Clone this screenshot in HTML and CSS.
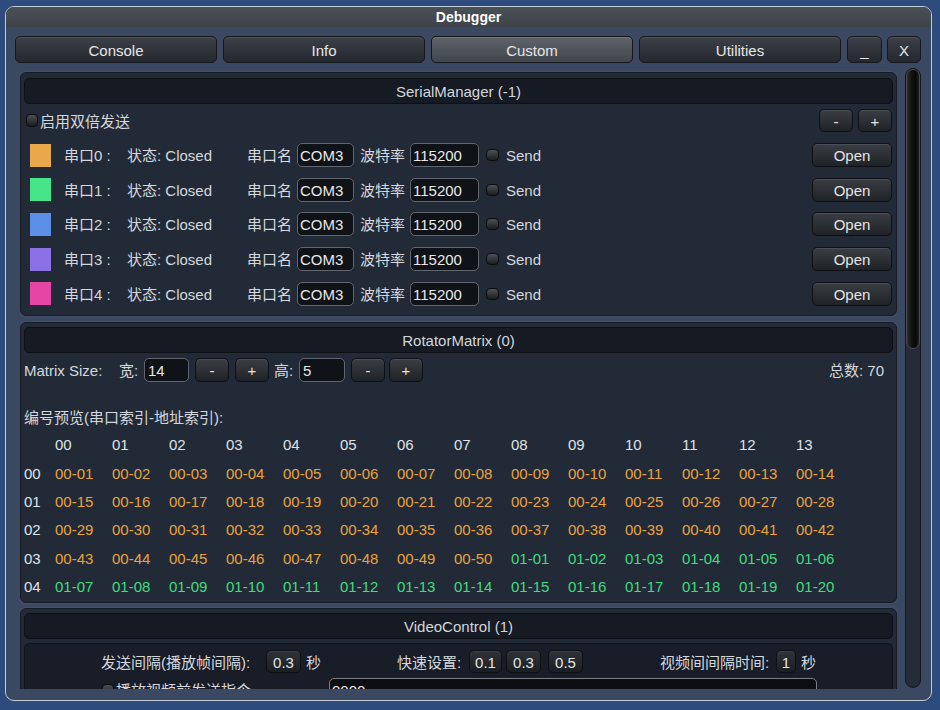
FILE: index.html
```html
<!DOCTYPE html>
<html>
<head>
<meta charset="utf-8">
<link rel="stylesheet" href="styles.css">
</head>
<body>
<div class="window">
  <div class="titlebar">Debugger</div>
  <div class="tabs">
    <div class="tab">Console</div>
    <div class="tab">Info</div>
    <div class="tab active">Custom</div>
    <div class="tab">Utilities</div>
    <div class="tab small">_</div>
    <div class="tab small x">X</div>
  </div>
  <div class="main">
    <div class="viewport">
      <div class="section s1">
        <div class="sec-head">SerialManager (-1)</div>
        <div class="toprow">
          <span class="chk chk-top"></span><span class="toplabel">启用双倍发送</span>
          <span class="btn pm minus">-</span><span class="btn pm plus">+</span>
        </div>
        <div class="srow"><span class="sw c0"></span><span class="plabel">串口0 :</span><span class="status">状态: Closed</span><span class="lbl">串口名</span><span class="field com">COM3</span><span class="lbl baud-l">波特率</span><span class="field baud">115200</span><span class="chk send-chk"></span><span class="send">Send</span><span class="btn open">Open</span></div>
        <div class="srow"><span class="sw c1"></span><span class="plabel">串口1 :</span><span class="status">状态: Closed</span><span class="lbl">串口名</span><span class="field com">COM3</span><span class="lbl baud-l">波特率</span><span class="field baud">115200</span><span class="chk send-chk"></span><span class="send">Send</span><span class="btn open">Open</span></div>
        <div class="srow"><span class="sw c2"></span><span class="plabel">串口2 :</span><span class="status">状态: Closed</span><span class="lbl">串口名</span><span class="field com">COM3</span><span class="lbl baud-l">波特率</span><span class="field baud">115200</span><span class="chk send-chk"></span><span class="send">Send</span><span class="btn open">Open</span></div>
        <div class="srow"><span class="sw c3"></span><span class="plabel">串口3 :</span><span class="status">状态: Closed</span><span class="lbl">串口名</span><span class="field com">COM3</span><span class="lbl baud-l">波特率</span><span class="field baud">115200</span><span class="chk send-chk"></span><span class="send">Send</span><span class="btn open">Open</span></div>
        <div class="srow"><span class="sw c4"></span><span class="plabel">串口4 :</span><span class="status">状态: Closed</span><span class="lbl">串口名</span><span class="field com">COM3</span><span class="lbl baud-l">波特率</span><span class="field baud">115200</span><span class="chk send-chk"></span><span class="send">Send</span><span class="btn open">Open</span></div>
      </div>

      <div class="section s2">
        <div class="sec-head">RotatorMatrix (0)</div>
        <div class="mrow">
          <span class="msize">Matrix Size:</span>
          <span class="wl">宽:</span><span class="field mfield">14</span>
          <span class="btn mb">-</span><span class="btn mb mb2">+</span>
          <span class="wl hl">高:</span><span class="field mfield">5</span>
          <span class="btn mb">-</span><span class="btn mb mb3">+</span>
          <span class="total">总数: 70</span>
        </div>
        <div class="preview">编号预览(串口索引-地址索引):</div>
        <div class="grid">
          <span></span><span>00</span><span>01</span><span>02</span><span>03</span><span>04</span><span>05</span><span>06</span><span>07</span><span>08</span><span>09</span><span>10</span><span>11</span><span>12</span><span>13</span>
          <span>00</span><span class="o">00-01</span><span class="o">00-02</span><span class="o">00-03</span><span class="o">00-04</span><span class="o">00-05</span><span class="o">00-06</span><span class="o">00-07</span><span class="o">00-08</span><span class="o">00-09</span><span class="o">00-10</span><span class="o">00-11</span><span class="o">00-12</span><span class="o">00-13</span><span class="o">00-14</span>
          <span>01</span><span class="o">00-15</span><span class="o">00-16</span><span class="o">00-17</span><span class="o">00-18</span><span class="o">00-19</span><span class="o">00-20</span><span class="o">00-21</span><span class="o">00-22</span><span class="o">00-23</span><span class="o">00-24</span><span class="o">00-25</span><span class="o">00-26</span><span class="o">00-27</span><span class="o">00-28</span>
          <span>02</span><span class="o">00-29</span><span class="o">00-30</span><span class="o">00-31</span><span class="o">00-32</span><span class="o">00-33</span><span class="o">00-34</span><span class="o">00-35</span><span class="o">00-36</span><span class="o">00-37</span><span class="o">00-38</span><span class="o">00-39</span><span class="o">00-40</span><span class="o">00-41</span><span class="o">00-42</span>
          <span>03</span><span class="o">00-43</span><span class="o">00-44</span><span class="o">00-45</span><span class="o">00-46</span><span class="o">00-47</span><span class="o">00-48</span><span class="o">00-49</span><span class="o">00-50</span><span class="g">01-01</span><span class="g">01-02</span><span class="g">01-03</span><span class="g">01-04</span><span class="g">01-05</span><span class="g">01-06</span>
          <span>04</span><span class="g">01-07</span><span class="g">01-08</span><span class="g">01-09</span><span class="g">01-10</span><span class="g">01-11</span><span class="g">01-12</span><span class="g">01-13</span><span class="g">01-14</span><span class="g">01-15</span><span class="g">01-16</span><span class="g">01-17</span><span class="g">01-18</span><span class="g">01-19</span><span class="g">01-20</span>
        </div>
      </div>

      <div class="section s3">
        <div class="sec-head">VideoControl (1)</div>
        <div class="vbox">
          <div class="vrow">
            <span class="vl1">发送间隔(播放帧间隔):</span>
            <span class="btn vb w35">0.3</span>
            <span class="sec sec1">秒</span>
            <span class="vl2">快速设置:</span>
            <span class="btn vb w33">0.1</span>
            <span class="btn vb w35 q2">0.3</span>
            <span class="btn vb w35 q3">0.5</span>
            <span class="vl3">视频间间隔时间:</span>
            <span class="btn vb w20">1</span>
            <span class="sec">秒</span>
          </div>
          <div class="vrow2">
            <span class="chk vchk"></span><span class="vtext">播放视频前发送指令</span>
            <span class="field vfield">0000</span>
          </div>
        </div>
      </div>
    </div>
    <div class="scroll"><div class="thumb"></div></div>
  </div>
</div>
</body>
</html>
```

FILE: styles.css
```css
body {
  margin: 0;
  background: #2d4b7c;
  font-family: "Liberation Sans", "Noto Sans CJK SC", sans-serif;
  font-size: 15px;
  color: #d4d8de;
}

.window {
  margin: 6px 0 0 5px;
  width: 927px;
  height: 695px;
  box-sizing: border-box;
  border: 1px solid #c4cbd5;
  border-radius: 9px;
  background: #3b4862;
  overflow: hidden;
}

.titlebar {
  height: 20px;
  background: linear-gradient(#4b4f56, #3e4249);
  color: #ffffff;
  font-weight: bold;
  font-size: 14px;
  line-height: 20px;
  text-align: center;
}

.tabs {
  display: flex;
  margin: 9px 0 0 9px;
  height: 27px;
}

.tab {
  width: 202px;
  margin-right: 6px;
  box-sizing: border-box;
  border: 1px solid #15181c;
  border-radius: 5px;
  background: linear-gradient(#3c4047, #24282e);
  color: #e6e6e6;
  text-align: center;
  padding-top: 2px;
  line-height: 23px;
  box-shadow: inset 0 1px 0 #4d5259;
}

.tab.active {
  background: linear-gradient(#5f646b, #41464d);
  box-shadow: inset 0 1px 0 #747980;
}

.tab.small {
  width: 35px;
  margin-right: 5px;
}

.tab.x {
  width: 34px;
}

.main {
  display: flex;
  margin-top: 5px;
  height: 621px;
}

.viewport {
  width: 877px;
  margin-left: 14px;
  height: 621px;
  overflow: hidden;
  padding-top: 4px;
  box-sizing: border-box;
}

.scroll {
  margin-left: 8px;
  width: 16px;
  height: 620px;
  box-sizing: border-box;
  border: 1px solid #141922;
  border-radius: 8px;
  background: #242b39;
}

.thumb {
  width: 14px;
  height: 280px;
  box-sizing: border-box;
  border: 1px solid #4a4a4a;
  border-radius: 7px;
  background: linear-gradient(to right, #2e2e2e, #141414 35%, #080808 70%, #1e1e1e);
}

.section {
  box-sizing: border-box;
  border: 1px solid #161b24;
  border-radius: 6px;
  background: #232a37;
  padding: 5px 3px 0;
  margin-bottom: 6px;
  box-shadow: 0 0 0 1px #44506a;
}

.s1 { height: 244px; }
.s2 { height: 281px; padding-top: 4px; margin-bottom: 5px; }
.s3 { height: 200px; padding-top: 4px; }

.sec-head {
  height: 26px;
  box-sizing: border-box;
  border: 1px solid #0d1015;
  border-radius: 5px;
  background: #161a22;
  text-align: center;
  padding-top: 1px;
  line-height: 23px;
  color: #d2d6dc;
}

/* text in control rows sits 1px below the box centre */
.toprow > span,
.srow > span,
.mrow > span,
.vrow > span,
.vrow2 > span {
  padding-top: 2px;
}

.btn {
  display: inline-block;
  box-sizing: border-box;
  border: 1px solid #0e1013;
  border-radius: 5px;
  background: linear-gradient(#3a3e44, #1f2226);
  box-shadow: inset 0 1px 0 #4a4e55;
  color: #e4e4e4;
  text-align: center;
}

.field {
  display: inline-block;
  box-sizing: border-box;
  height: 24px;
  border: 1px solid #62666c;
  border-radius: 5px;
  background: #0f1216;
  color: #e8e8e8;
  line-height: 20px;
  padding-left: 2px;
}

.chk {
  display: inline-block;
  box-sizing: border-box;
  width: 13px;
  height: 12px;
  border: 1px solid #0a0b0d;
  border-radius: 4px;
  background: linear-gradient(#4c4f54, #1b1d20);
}

/* Serial manager */
.toprow {
  display: flex;
  align-items: center;
  margin-top: 5px;
  height: 23px;
  line-height: 20px;
}

.chk-top {
  width: 12px;
  height: 13px;
  margin-left: 2px;
}

.toplabel {
  margin-left: 2px;
}

.pm {
  width: 34px;
  height: 23px;
  line-height: 19px;
}

.pm.minus {
  margin-left: auto;
}

.pm.plus {
  margin-left: 5px;
  margin-right: 1px;
}

.srow {
  display: flex;
  align-items: center;
  height: 24px;
  margin-top: 10.7px;
  line-height: 20px;
}

.toprow + .srow {
  margin-top: 11px;
}

.sw {
  width: 21px;
  height: 21px;
  margin-left: 6px;
}

.c0 { background: #e9a84a; }
.c1 { background: #47e58a; }
.c2 { background: #5b8fe8; }
.c3 { background: #8b70e6; }
.c4 { background: #e546a6; }

.plabel {
  margin-left: 13px;
  width: 63px;
}

.status { width: 120px; }
.lbl { width: 50px; }
.baud-l { margin-left: 6px; }
.com { width: 57px; }
.baud { width: 69px; }

.send-chk { margin-left: 7px; }
.send { margin-left: 7px; }

.open {
  margin-left: auto;
  margin-right: 1px;
  width: 80px;
  height: 24px;
  line-height: 20px;
}

/* Rotator matrix */
.mrow {
  display: flex;
  align-items: center;
  height: 24px;
  margin-top: 5px;
  line-height: 20px;
}

.msize { width: 95px; }
.wl { width: 25px; }
.mfield { width: 45px; padding-left: 3px; }
.hl + .mfield { width: 46px; }

.mb {
  width: 34px;
  height: 24px;
  line-height: 20px;
  margin-left: 6px;
}

.mb2 { margin-right: 5px; }
.mb3 { margin-left: 4px; }

.total {
  margin-left: auto;
  margin-right: 9px;
}

.preview {
  margin-top: 21px;
  height: 28px;
  padding-top: 2px;
  box-sizing: border-box;
  line-height: 26px;
}

.grid {
  display: grid;
  grid-template-columns: 31px repeat(14, 57px);
  grid-auto-rows: 28.4px;
  align-items: center;
  color: #dfe2e6;
  line-height: 20px;
}

.grid .o { color: #e7a33f; }
.grid .g { color: #3fdd7d; }

/* Video control */
.vbox {
  margin-top: 4px;
  height: 120px;
  box-sizing: border-box;
  border: 1px solid #10141a;
  border-radius: 5px;
  background: #181d27;
  padding: 6px 0 0 76px;
}

.vrow {
  display: flex;
  align-items: center;
  height: 23px;
  line-height: 20px;
}

.vb {
  height: 23px;
  line-height: 19px;
  background: linear-gradient(#30343a, #1b1e22);
  box-shadow: inset 0 1px 0 #3e4248;
}

.w35 { width: 35px; }
.w33 { width: 33px; }
.w20 { width: 20px; }

.vl1 { width: 165px; }
.sec { margin-left: 5px; }
.sec1 { width: 91px; }
.vl2 { width: 72px; }
.q2 { margin-left: 4px; }
.q3 { margin-left: 7px; }
.vl3 { margin-left: 77px; width: 116px; }

.vrow2 {
  display: flex;
  align-items: center;
  margin-top: 5px;
  height: 24px;
  line-height: 20px;
}

.vchk {
  margin-left: 1px;
  width: 12px;
  height: 12px;
}

.vtext {
  margin-left: 2px;
  width: 213px;
}

.vfield {
  width: 488px;
  border-color: #7a7e84;
  background: #0c0e11;
}
```
